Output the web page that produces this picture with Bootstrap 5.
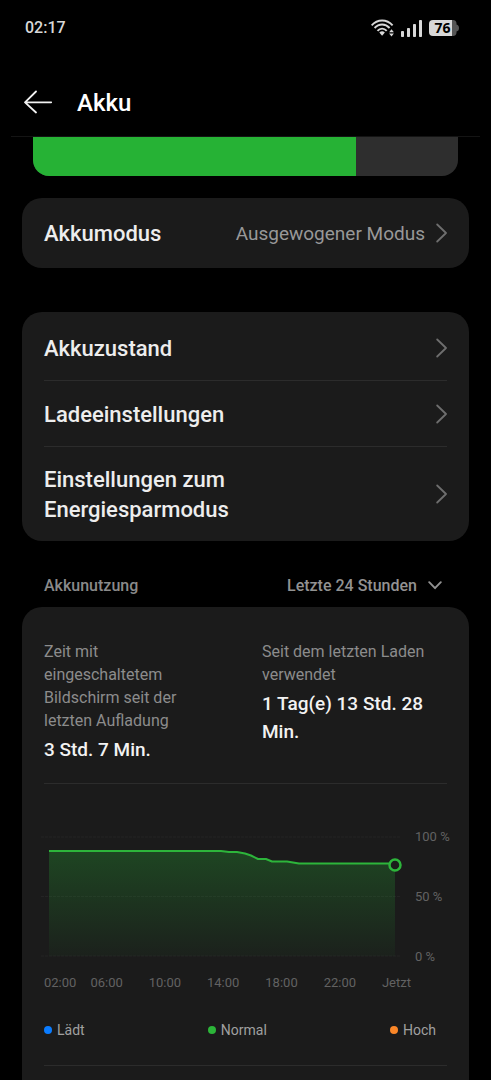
<!DOCTYPE html>
<html lang="de" data-bs-theme="dark">
<head>
<meta charset="utf-8">
<meta name="viewport" content="width=device-width, initial-scale=1">
<title>Akku</title>
<link href="https://cdn.jsdelivr.net/npm/bootstrap@5.3.0/dist/css/bootstrap.min.css" rel="stylesheet">
<style>
  body { background: #000; color: #ededed; font-family: Roboto, "Noto Sans", sans-serif; font-size: 16px; }
  svg { display: block; flex-shrink: 0; }
  .status-bar { height: 54px; padding: 2px 32px 0 25px; font-weight: 500; line-height: 20px; color: #d8d8d8; }
  .status-icons { gap: 7px; }
  .battery-icon { width: 30px; height: 16px; }
  .battery-level { inset: 0 3px 0 0; font: 700 14px/16px "Open Sans", sans-serif; color: #000; text-align: center; }
  .app-header { height: 83px; margin: 0 11px; padding: 14px 13px 0; gap: 25px; border-bottom: 1px solid #141414; }
  .app-title { font-size: 24px; line-height: 32px; font-weight: 500; padding-top: 2px; }
  .page-body { padding: 0 22px; }
  .charge-bar { height: 39px; margin: 0 11px 22px; border-radius: 0 0 16px 16px; background: #2e2e2e; }
  .charge-bar .progress-bar { background: #26b235; }
  .panel { background: #1b1b1b; border-radius: 20px; padding: 0 22px; }
  .panel-menu { margin-top: 44px; }
  .setting { min-height: 66px; gap: 11px; color: #ededed; font-size: 22px; line-height: 30px; font-weight: 500; }
  .setting span { padding-top: 2px; }
  .setting + .setting { border-top: 1px solid #2c2c2c; }
  .setting.single { min-height: 70px; }
  .setting.first { min-height: 68px; padding-top: 4px; }
  .setting.tall { min-height: 95px; }
  .setting-value { font-size: 19px; font-weight: 400; color: #989898; }
  .usage-head { height: 66px; padding: 24px 27px 0 22px; color: #8a8a8a; font-weight: 500; }
  .usage-select { appearance: none; border: 0; background: transparent; color: #929292; font: inherit; line-height: 24px; padding: 0 25px 0 0; }
  .select-arrow { right: 0; top: 7px; pointer-events: none; }
  .usage-panel { padding-top: 33px; border-radius: 20px 20px 0 0; }
  .stats { display: grid; grid-template-columns: 1fr 1fr; column-gap: 33px; padding-bottom: 19px; border-bottom: 1px solid #2c2c2c; }
  .stat-name { font-weight: 400; line-height: 23px; color: #8c8c8c; }
  .stat-figure { font-size: 19px; line-height: 28px; font-weight: 500; color: #f2f2f2; margin: 4px 0 0; }
  .axis-text { font-size: 13px; line-height: 20px; color: #626262; }
  .chart-row { margin: 43px -4px 0 -3px; gap: 14px; }
  .chart-row svg { overflow: visible; }
  .scale { width: 36px; white-space: nowrap; }
  .hours { padding: 6px 36px 0 0; gap: 14px; }
  .legend-row { padding: 27px 11px 25px 0; font-size: 14px; line-height: 20px; color: #a0a0a0; border-bottom: 1px solid #2c2c2c; }
  .legend-row li { gap: 5px; }
  .legend-dot { width: 8px; height: 8px; }
  .dot-charging { background: #0a7cff; }
  .dot-normal { background: #2cb539; }
  .dot-high { background: #fa8628; }
</style>
</head>
<body class="min-vh-100 d-flex flex-column">
<div class="status-bar d-flex align-items-center justify-content-between">
  <span>02:17</span>
  <div class="status-icons d-flex align-items-center">
    <svg width="23" height="18" viewBox="0 0 23 18" fill="none" stroke="#d8d8d8" stroke-width="1.9" aria-hidden="true">
      <path d="M.6 6.4C6.4-.2 15.800-.2 21.600 6.400M3.600 9C7.800 4.300 14.400 4.300 18.600 9M6.500 11.900C9.200 8.800 13 8.800 15.700 11.900"/>
      <path d="M8.300 13.400q2.800-2.300 5.600 0l-2.800 3.400z" fill="#d8d8d8" stroke="none"/>
      <path d="M20.500 10.200l2.400 3h-4.800zM20.500 17.600l2.400-3h-4.800z" fill="#d8d8d8" stroke="none"/>
    </svg>
    <svg width="21" height="17" viewBox="0 0 21 17" fill="#d8d8d8" aria-hidden="true">
      <rect x="0" y="11" width="3" height="6" rx=".8"/><rect x="6" y="8" width="3" height="9" rx=".8"/><rect x="12" y="4" width="3" height="13" rx=".8"/><rect x="18" y="0" width="3" height="17" rx=".8"/>
    </svg>
    <div class="battery-icon position-relative">
      <svg width="30" height="16" viewBox="0 0 30 16" aria-hidden="true">
        <path d="M23 0h1q3 0 3.500 3v1.500q2.500.5 2.500 3.500t-2.500 3.500V13q-.5 3-3.500 3h-1z" fill="#555"/>
        <path d="M4 0h19v16H4q-4 0-4-4V4q0-4 4-4z" fill="#d8d8d8"/>
      </svg>
      <span class="battery-level position-absolute">76</span>
    </div>
  </div>
</div>

<header class="app-header d-flex align-items-center">
  <button type="button" class="btn p-0 border-0" aria-label="Zurück">
    <svg width="28" height="24" viewBox="0 0 28 24" fill="none" stroke="#f2f2f2" stroke-width="1.8" stroke-linecap="round" stroke-linejoin="round"><path d="M12 1.500L1 12.300l11 10.200M1 12.300h26.200"/></svg>
  </button>
  <h1 class="app-title m-0">Akku</h1>
</header>

<main class="page-body flex-grow-1 d-flex flex-column">
  <div class="progress charge-bar" role="progressbar" aria-label="Akkustand" aria-valuenow="76" aria-valuemin="0" aria-valuemax="100">
    <div class="progress-bar" style="width:76%"></div>
  </div>

  <section class="panel">
    <a href="#" class="setting single d-flex align-items-center text-decoration-none">
      <span class="flex-grow-1">Akkumodus</span>
      <span class="setting-value">Ausgewogener Modus</span>
      <svg width="11" height="20" viewBox="0 0 11 20" fill="none" stroke="#6e6e6e" stroke-width="1.800" stroke-linecap="round" stroke-linejoin="round"><path d="M1.200 1.500L10 10l-8.800 8.500"/></svg>
    </a>
  </section>

  <nav class="panel panel-menu">
    <a href="#" class="setting first d-flex align-items-center text-decoration-none">
      <span class="flex-grow-1">Akkuzustand</span>
      <svg width="11" height="20" viewBox="0 0 11 20" fill="none" stroke="#6e6e6e" stroke-width="1.800" stroke-linecap="round" stroke-linejoin="round"><path d="M1.200 1.500L10 10l-8.800 8.500"/></svg>
    </a>
    <a href="#" class="setting d-flex align-items-center text-decoration-none">
      <span class="flex-grow-1">Ladeeinstellungen</span>
      <svg width="11" height="20" viewBox="0 0 11 20" fill="none" stroke="#6e6e6e" stroke-width="1.800" stroke-linecap="round" stroke-linejoin="round"><path d="M1.200 1.500L10 10l-8.800 8.500"/></svg>
    </a>
    <a href="#" class="setting tall d-flex align-items-center text-decoration-none">
      <span class="flex-grow-1">Einstellungen zum<br>Energiesparmodus</span>
      <svg width="11" height="20" viewBox="0 0 11 20" fill="none" stroke="#6e6e6e" stroke-width="1.800" stroke-linecap="round" stroke-linejoin="round"><path d="M1.200 1.500L10 10l-8.800 8.500"/></svg>
    </a>
  </nav>

  <div class="usage-head d-flex align-items-center justify-content-between">
    <label for="period">Akkunutzung</label>
    <div class="position-relative">
      <select id="period" class="usage-select"><option>Letzte 24 Stunden</option></select>
      <svg class="select-arrow position-absolute" width="14" height="9" viewBox="0 0 14 9" fill="none" stroke="#929292" stroke-width="1.900" stroke-linecap="round" stroke-linejoin="round"><path d="M1.200 1.200L7 7.200l5.800-6"/></svg>
    </div>
  </div>

  <section class="panel usage-panel flex-grow-1">
    <dl class="stats mb-0">
      <div class="pe-4">
        <dt class="stat-name">Zeit mit eingeschaltetem Bildschirm seit der letzten Aufladung</dt>
        <dd class="stat-figure">3 Std. 7 Min.</dd>
      </div>
      <div>
        <dt class="stat-name">Seit dem letzten Laden verwendet</dt>
        <dd class="stat-figure">1 Tag(e) 13 Std. 28 Min.</dd>
      </div>
    </dl>

    <div class="chart-row axis-text d-flex">
      <div class="flex-grow-1">
        <svg class="w-100 h-auto" viewBox="0 0 360 140" role="img" aria-label="Akkustand der letzten 24 Stunden">
          <defs>
            <linearGradient id="fade" x1="0" y1="0" x2="0" y2="1">
              <stop offset="0" stop-color="#26b235" stop-opacity=".28"/>
              <stop offset="1" stop-color="#26b235" stop-opacity=".04"/>
            </linearGradient>
          </defs>
          <path d="M0 10h360M0 69.500h360M0 129h360" stroke="#242424" stroke-dasharray="3 1"/>
          <path d="M8 24H180L188 25H196L204 26.500L210 28.500L217 32H225L231 34.500H246L258 36.500H354V129H8z" fill="url(#fade)"/>
          <path d="M8 24H180L188 25H196L204 26.500L210 28.500L217 32H225L231 34.500H246L258 36.500H354" fill="none" stroke="#2db53b" stroke-width="2" stroke-linejoin="round"/>
          <circle cx="354" cy="38" r="5.500" fill="#1b1b1b" stroke="#2db53b" stroke-width="2.500"/>
        </svg>
      </div>
      <div class="scale d-flex flex-column justify-content-between">
        <span>100 %</span><span>50 %</span><span>0 %</span>
      </div>
    </div>
    <div class="hours axis-text d-flex">
      <span>02:00</span>
      <div class="flex-grow-1 d-flex justify-content-between">
        <span>06:00</span><span>10:00</span><span>14:00</span><span>18:00</span><span>22:00</span><span>Jetzt</span>
      </div>
    </div>
    <ul class="legend-row list-unstyled d-flex justify-content-between mb-0">
      <li class="d-flex align-items-center"><span class="legend-dot dot-charging rounded-circle"></span>Lädt</li>
      <li class="d-flex align-items-center"><span class="legend-dot dot-normal rounded-circle"></span>Normal</li>
      <li class="d-flex align-items-center"><span class="legend-dot dot-high rounded-circle"></span>Hoch</li>
    </ul>
  </section>
</main>
<script src="https://cdn.jsdelivr.net/npm/bootstrap@5.3.0/dist/js/bootstrap.bundle.min.js"></script>
</body>
</html>
